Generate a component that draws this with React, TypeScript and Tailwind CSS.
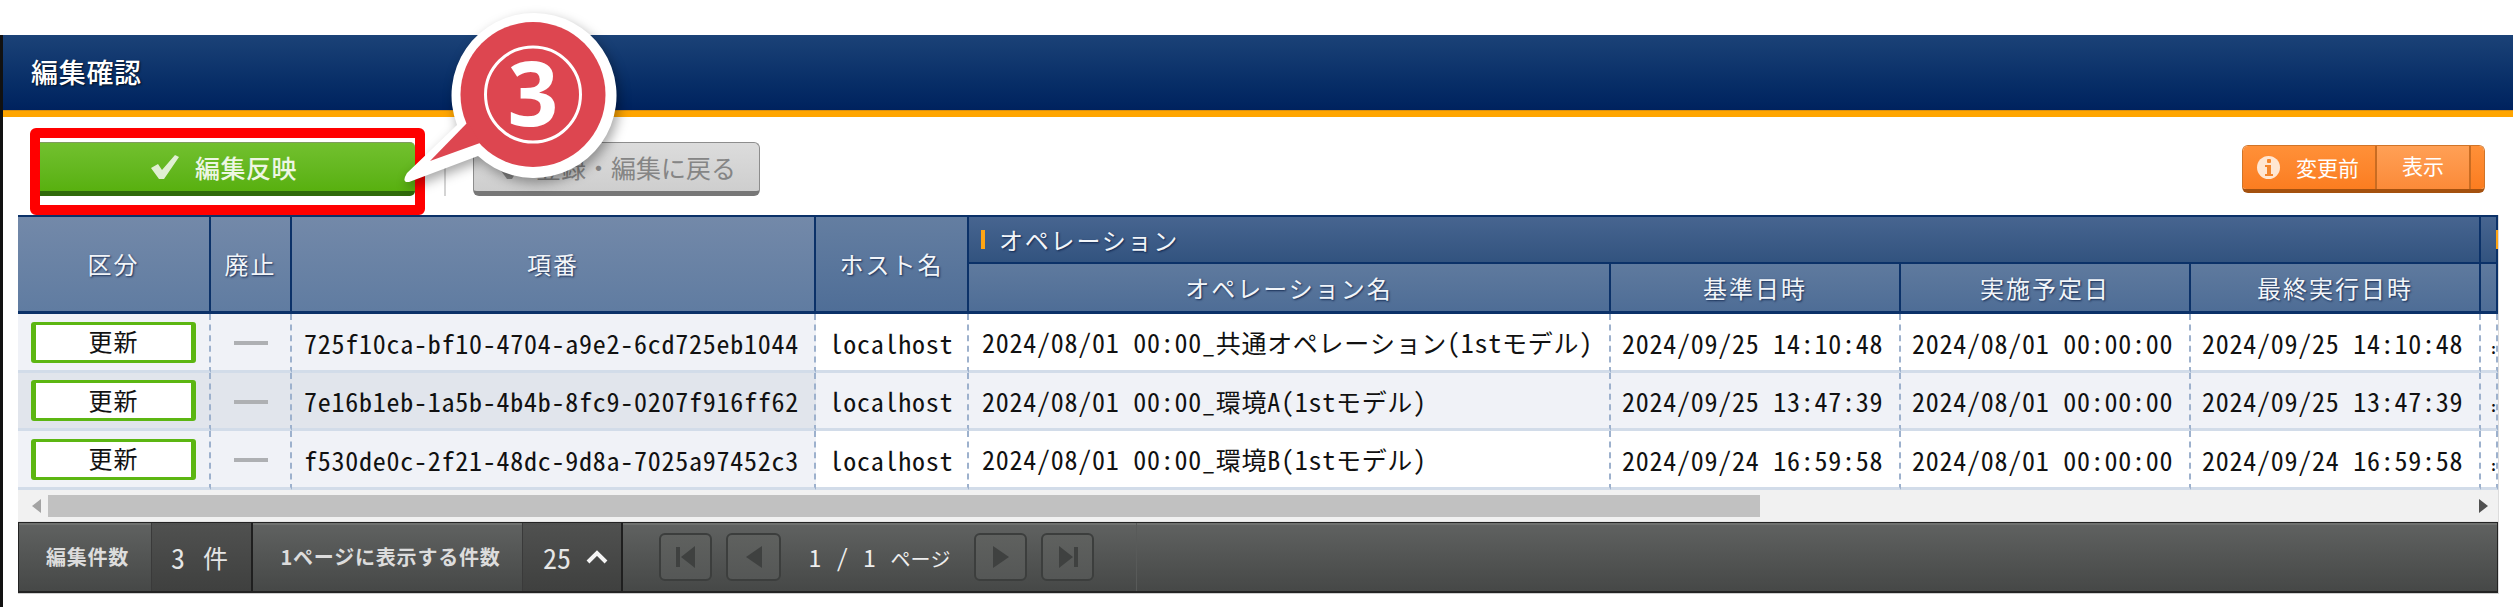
import React from "react";

const sans = "[font-family:'Noto_Sans_CJK_JP','Noto_Sans',sans-serif]";
const mono = "[font-family:'Noto_Sans_Mono_CJK_JP','Liberation_Mono','Noto_Sans_CJK_JP',monospace]";
const thShadow = "[text-shadow:1px_1px_2px_rgba(0,20,60,0.75)]";

function J({ children }: { children: React.ReactNode }) {
  return <span className="text-[25px] tracking-[0.7px]">{children}</span>;
}

const rows = [
  {
    id: "725f10ca-bf10-4704-a9e2-6cd725eb1044",
    name: <>2024/08/01 00:00_<J>共通オペレーション</J>(1st<J>モデル</J>)</>,
    base: "2024/09/25 14:10:48",
    plan: "2024/08/01 00:00:00",
    last: "2024/09/25 14:10:48",
    h: "h-[59px]",
    fix: "bg-[#f0f2f7]",
    bg: "bg-white",
  },
  {
    id: "7e16b1eb-1a5b-4b4b-8fc9-0207f916ff62",
    name: <>2024/08/01 00:00_<J>環境</J>A(1st<J>モデル</J>)</>,
    base: "2024/09/25 13:47:39",
    plan: "2024/08/01 00:00:00",
    last: "2024/09/25 13:47:39",
    h: "h-[58px]",
    fix: "bg-[#e1e5ec]",
    bg: "bg-[#f0f2f7]",
  },
  {
    id: "f530de0c-2f21-48dc-9d8a-7025a97452c3",
    name: <>2024/08/01 00:00_<J>環境</J>B(1st<J>モデル</J>)</>,
    base: "2024/09/24 16:59:58",
    plan: "2024/08/01 00:00:00",
    last: "2024/09/24 16:59:58",
    h: "h-[59px]",
    fix: "bg-[#f0f2f7]",
    bg: "bg-white",
  },
];

const thBase = `p-0 text-center align-middle font-normal text-[24px] tracking-[2px] text-[#f2f5f9] border-r-2 border-r-[#0b3168] ${thShadow}`;
const thTall = `${thBase} border-t-2 border-t-[#0b3168] border-b-[3px] border-b-[#0b3168] bg-gradient-to-b from-[#7389a9] to-[#607ca1]`;
const thHost = `${thBase} border-t-2 border-t-[#0b3168] border-b-[3px] border-b-[#0b3168] bg-gradient-to-b from-[#647ea1] to-[#4f6e97]`;
const thGroup = `p-0 text-left align-middle font-normal text-[24px] tracking-[1.8px] text-[#f2f5f9] h-[49px] border-t-2 border-t-[#0b3168] border-b-2 border-b-[#0b3168] border-r-2 border-r-[#0b3168] bg-gradient-to-b from-[#476590] to-[#32537f] ${thShadow}`;
const thSub = `${thBase} h-[50px] border-b-[3px] border-b-[#0b3168] bg-gradient-to-b from-[#5f7a9e] to-[#4e6d96]`;
const td = `p-0 border-b-[3px] border-b-[#d2dce9] border-r-2 border-r-[#9db1cd] border-dashed [border-bottom-style:solid] text-[26px] tracking-[0.75px] text-[#111] whitespace-nowrap ${mono}`;

function NavButton({ w, children }: { w: string; children: React.ReactNode }) {
  return (
    <div className={`${w} h-[48px] flex items-center justify-center rounded-[6px] border-2 border-[#3c3e3d] bg-gradient-to-b from-[#5f615f] to-[#555756]`}>
      {children}
    </div>
  );
}

export default function App() {
  return (
    <div className={`relative w-[2513px] h-[607px] overflow-hidden bg-white pt-[35px] ${sans}`}>
      <div className="h-[572px] border-l-[3px] border-l-[#111]">
        {/* Title bar */}
        <div className="h-[75px] pl-[28px] flex items-center bg-gradient-to-b from-[#1b4277] to-[#00225e]">
          <span className="text-[27px] leading-none text-white tracking-[0.7px] [text-shadow:1px_1px_2px_rgba(0,0,0,0.7)] font-medium -mt-[2px]">編集確認</span>
        </div>
        <div className="h-[7px] bg-[#ffa500] border-t border-t-[#d98f10]" />

        {/* Toolbar */}
        <div className="h-[98px] flex items-start pl-[37px] pr-[28px] pt-[25px]">
          <button className="w-[375px] h-[54px] flex items-center justify-center gap-[15px] pr-[8px] rounded-r-[5px] border-t border-t-[#7f9c5f] border-b-[5px] border-b-[#2f6a0a] bg-gradient-to-b from-[#72c02e] to-[#58b00e] text-[#edf6e3]">
            <svg width="30" height="26" viewBox="0 0 30 26" className="opacity-90">
              <path d="M1 14 L8 10 L12 16 L25 1 L29 3 L14 25 L9 25 Z" fill="#eef6e6" />
            </svg>
            <span className="text-[25px] tracking-[0.5px] leading-none font-medium">編集反映</span>
          </button>
          <div className="w-[2px] h-[41px] mt-[13px] ml-[29px] bg-[#d4d4d4]" />
          <button className="ml-[27px] w-[287px] h-[54px] flex items-center pl-[24px] gap-[10px] rounded-[6px] border border-[#8d8d8d] border-b-[5px] border-b-[#777] bg-gradient-to-b from-[#dcdcdc] to-[#cecece] text-[#858585]">
            <svg width="28" height="26" viewBox="0 0 28 26">
              <path d="M1 14 L8 10 L12 16 L24 1 L27 3 L14 25 L9 25 Z" fill="#858585" />
            </svg>
            <span className="text-[25px] leading-none">登録・編集に戻る</span>
          </button>
          <div className="ml-auto mt-[3px] flex w-[243px] h-[48px] overflow-hidden rounded-[6px] border border-[#d07428] border-b-[4px] border-b-[#a4510f] text-white text-[21px] leading-none">
            <div className="w-[134px] flex items-center pl-[14px] gap-[16px] bg-gradient-to-b from-[#ff9038] to-[#fb7d20] border-r-2 border-r-[#c96c22]">
              <span className="flex w-[23px] h-[23px] items-center justify-center rounded-full bg-[#ffe6d2]">
                <svg width="8" height="17" viewBox="0 0 8 17">
                  <rect x="2" y="0" width="4" height="4" rx="1" fill="#f4862e" />
                  <path d="M0 6 H6 V15 H8 V17 H0 V15 H2 V8 H0 Z" fill="#f4862e" />
                </svg>
              </span>
              <span>変更前</span>
            </div>
            <div className="w-[94px] flex items-center justify-center pb-[5px] bg-gradient-to-b from-[#ffa055] to-[#fb8a38] border-r-2 border-r-[#c96c22]">表示</div>
            <div className="flex-1 bg-gradient-to-b from-[#ff9038] to-[#fb7d20]" />
          </div>
        </div>

        {/* Table */}
        <div className="ml-[15px] w-[2481px] border-r border-r-[#dcdcdc] border-b border-b-[#cfcfcf] overflow-hidden">
          <table className="table-fixed w-[2480px] border-separate border-spacing-0">
            <colgroup>
              <col className="w-[193px]" />
              <col className="w-[81px]" />
              <col className="w-[524px]" />
              <col className="w-[153px]" />
              <col className="w-[642px]" />
              <col className="w-[290px]" />
              <col className="w-[290px]" />
              <col className="w-[290px]" />
              <col className="w-[17px]" />
            </colgroup>
            <thead>
              <tr>
                <th rowSpan={2} className={thTall}>区分</th>
                <th rowSpan={2} className={thTall}>廃止</th>
                <th rowSpan={2} className={thTall}>項番</th>
                <th rowSpan={2} className={thHost}>ホスト名</th>
                <th colSpan={4} className={thGroup}>
                  <div className="flex items-center pl-[12px] gap-[14px]">
                    <span className="w-[4px] h-[19px] bg-[#ffa514]" />
                    <span className="leading-none">オペレーション</span>
                  </div>
                </th>
                <th className={`${thGroup} border-r-0`}>
                  <div className="pl-[15px]">
                    <div className="w-[2px] h-[19px] bg-[#ffa514]" />
                  </div>
                </th>
              </tr>
              <tr>
                <th className={thSub}>オペレーション名</th>
                <th className={thSub}>基準日時</th>
                <th className={thSub}>実施予定日</th>
                <th className={thSub}>最終実行日時</th>
                <th className={`${thSub} border-r-0`} />
              </tr>
            </thead>
            <tbody>
              {rows.map((r) => (
                <tr key={r.id} className={r.h}>
                  <td className={`${td} ${r.fix}`}>
                    <div className="ml-[13px] w-[165px] h-[41px] flex items-center justify-center rounded-[3px] border-y-[3px] border-x-[5px] border-[#5cb612] bg-white text-[24px] tracking-[1px] text-[#111] [font-family:'Noto_Sans_CJK_JP',sans-serif] leading-none pb-[2px]">
                      更新
                    </div>
                  </td>
                  <td className={`${td} ${r.fix}`}>
                    <div className="mx-auto mt-[2px] w-[34px] h-[4px] bg-[#aeb0b3]" />
                  </td>
                  <td className={`${td} ${r.fix} pl-[12px]`}>{r.id}</td>
                  <td className={`${td} ${r.bg} text-center`}>localhost</td>
                  <td className={`${td} ${r.bg} pl-[13px]`}>{r.name}</td>
                  <td className={`${td} ${r.bg} pl-[11px]`}>{r.base}</td>
                  <td className={`${td} ${r.bg} pl-[11px]`}>{r.plan}</td>
                  <td className={`${td} ${r.bg} pl-[11px]`}>{r.last}</td>
                  <td className={`${td} ${r.bg} border-r-0 pl-[9px]`}>
                    <span className="text-[14px] tracking-[0px] font-bold">:</span>
                  </td>
                </tr>
              ))}
            </tbody>
          </table>

          {/* Horizontal scrollbar */}
          <div className="h-[32px] flex items-center bg-[#f1f1f1] border-b border-b-[#e4e4e4]">
            <div className="w-[30px] flex justify-center pl-[6px]">
              <svg width="9" height="14" viewBox="0 0 9 14"><path d="M9 0 V14 L0 7 Z" fill="#a3a3a3" /></svg>
            </div>
            <div className="w-[1712px] h-[22px] bg-[#c1c1c1]" />
            <div className="flex-1 flex justify-end pr-[10px]">
              <svg width="9" height="14" viewBox="0 0 9 14"><path d="M0 0 V14 L9 7 Z" fill="#505050" /></svg>
            </div>
          </div>

          {/* Footer */}
          <div className="h-[71px] flex border border-[#232323] border-b-2 bg-gradient-to-b from-[#606261] to-[#464847] text-[#e6e6e6] shadow-[inset_0_2px_0_#6f716f]">
            <div className="w-[133px] flex items-center justify-center pl-[5px] text-[20px] tracking-[0.8px] font-bold text-[#dcdcdc] border-r border-r-[#3a3a3a]">編集件数</div>
            <div className="w-[101px] flex items-center pl-[19px] gap-[18px] text-[25px] bg-gradient-to-b from-[#505150] to-[#3f403f] border-r-2 border-r-[#1f1f1f]">
              <span className={`${mono} text-[28px] leading-none`}>3</span><span className="leading-none">件</span>
            </div>
            <div className="w-[270px] flex items-center justify-center pl-[6px] text-[20px] tracking-[0.8px] font-bold text-[#dcdcdc] whitespace-nowrap border-r border-r-[#3a3a3a]">1ページに表示する件数</div>
            <div className="w-[100px] flex items-center pl-[20px] gap-[15px] bg-gradient-to-b from-[#505150] to-[#3f403f] border-r-2 border-r-[#1f1f1f]">
              <span className={`${mono} text-[28px] leading-none`}>25</span>
              <svg width="22" height="14" viewBox="0 0 22 14"><path d="M2 12 L11 3 L20 12" fill="none" stroke="#f5f5f5" strokeWidth="4" /></svg>
            </div>
            <div className="w-[514px] flex items-center pl-[36px] border-r border-r-[#585a59]">
              <NavButton w="w-[53px]">
                <svg width="20" height="22" viewBox="0 0 20 22"><path d="M0 1 H4 V21 H0 Z M19 0 V22 L5 11 Z" fill="#3f4140" /></svg>
              </NavButton>
              <div className="w-[14px]" />
              <NavButton w="w-[55px]">
                <svg width="16" height="22" viewBox="0 0 16 22"><path d="M16 0 V22 L0 11 Z" fill="#3f4140" /></svg>
              </NavButton>
              <div className={`w-[193px] pl-[28px] text-[24px] tracking-[1.6px] text-[#eeeeee] whitespace-nowrap ${mono}`}>
                1 / 1 <span className="text-[20px] tracking-[0px]">ページ</span>
              </div>
              <NavButton w="w-[53px]">
                <svg width="16" height="22" viewBox="0 0 16 22"><path d="M0 0 V22 L16 11 Z" fill="#3f4140" /></svg>
              </NavButton>
              <div className="w-[14px]" />
              <NavButton w="w-[53px]">
                <svg width="20" height="22" viewBox="0 0 20 22"><path d="M1 0 V22 L15 11 Z M16 1 H20 V21 H16 Z" fill="#3f4140" /></svg>
              </NavButton>
            </div>
          </div>
        </div>
      </div>

      {/* Annotation: red highlight */}
      <div className="absolute left-[30px] top-[128px] w-[395px] h-[87px] border-[10px] border-[#ff0000] rounded-[6px] pointer-events-none" />

      {/* Annotation: numbered callout */}
      <svg width="250" height="200" viewBox="0 0 250 200" className="absolute left-[390px] top-0 drop-shadow-[3px_5px_6px_rgba(0,0,0,0.35)]">
        <path
          d="M67 125 A82.5 82.5 0 1 1 88 156 L19 182 Q11 183 17 173 Z"
          fill="#ffffff"
        />
        <circle cx="143" cy="94.5" r="72.5" fill="#dd4650" />
        <path d="M78 122 L40 161 L90 143 Z" fill="#dd4650" />
        <circle cx="143" cy="94.5" r="47.5" fill="none" stroke="#ffffff" strokeWidth="3" />
        <text
          x="143"
          y="126"
          textAnchor="middle"
          fontSize="89"
          fontWeight="700"
          fill="#ffffff"
          fontFamily="'Noto Sans','Open Sans',sans-serif"
        >
          3
        </text>
      </svg>
    </div>
  );
}
